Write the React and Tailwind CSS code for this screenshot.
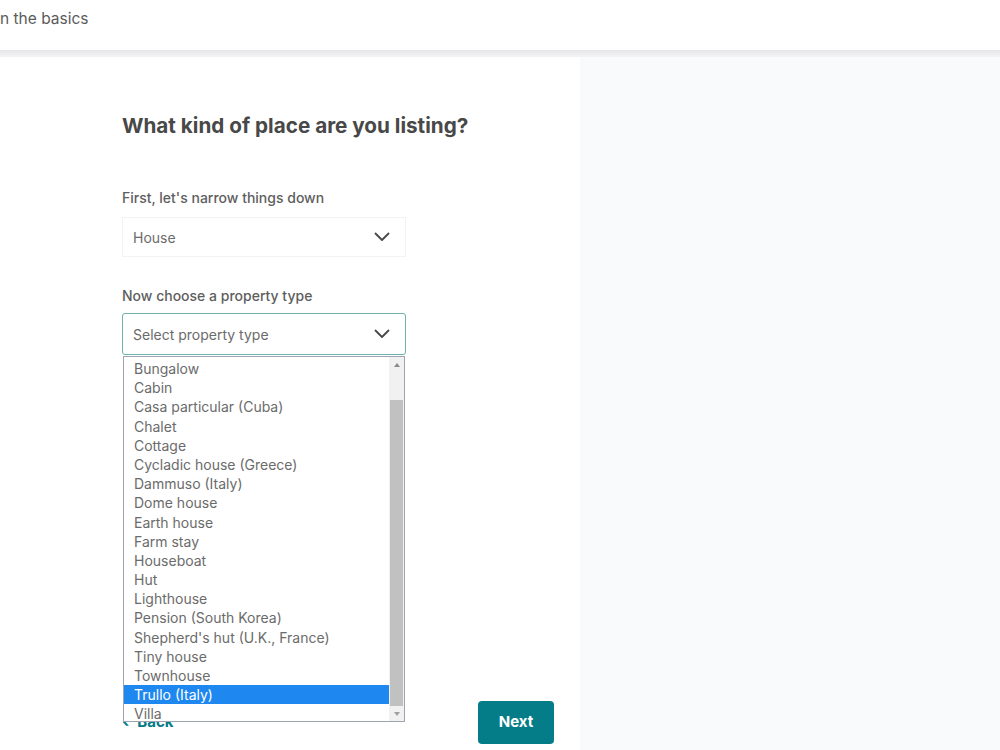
import { useState } from 'react';

const types = [
  'Bungalow',
  'Cabin',
  'Casa particular (Cuba)',
  'Chalet',
  'Cottage',
  'Cycladic house (Greece)',
  'Dammuso (Italy)',
  'Dome house',
  'Earth house',
  'Farm stay',
  'Houseboat',
  'Hut',
  'Lighthouse',
  'Pension (South Korea)',
  "Shepherd's hut (U.K., France)",
  'Tiny house',
  'Townhouse',
  'Trullo (Italy)',
  'Villa',
];

function Chevron() {
  return (
    <svg width="16" height="10" viewBox="0 0 16 10" fill="none" className="text-[#484848]">
      <path d="M1.5 1.5 L8 8 L14.5 1.5" stroke="currentColor" strokeWidth="1.8" strokeLinecap="round" strokeLinejoin="round" />
    </svg>
  );
}

function PropertyList({ active }) {
  return (
    <div className="absolute left-px top-[43px] z-10 flex h-[366px] w-[282px] overflow-hidden border border-[#9ea4b0] bg-white">
      <ul className="flex-1 pt-[2px]">
        {types.map((t) => (
          <li
            key={t}
            className={
              t === active
                ? 'h-[19.2px] bg-[#1e87f0] pl-[10px] text-[14px] leading-[19.2px] text-white'
                : 'h-[19.2px] pl-[10px] text-[14px] leading-[19.2px] text-[#6b6b6b]'
            }
          >
            {t}
          </li>
        ))}
      </ul>
      {/* Scrollbar */}
      <div className="flex w-[15px] flex-col bg-[#f1f1f1]">
        <div className="flex h-[15px] items-center justify-center">
          <div className="h-0 w-0 border-x-[3px] border-b-[4px] border-x-transparent border-b-[#8a8a8a]" />
        </div>
        <div className="mx-[1px] mt-[28px] flex-1 bg-[#c1c1c1]" />
        <div className="flex h-[15px] items-center justify-center">
          <div className="h-0 w-0 border-x-[3px] border-t-[4px] border-x-transparent border-t-[#a0a0a0]" />
        </div>
      </div>
    </div>
  );
}

export default function App() {
  const [active] = useState('Trullo (Italy)');

  return (
    <div className="flex h-[750px] w-[1000px] flex-col overflow-hidden bg-white font-['Inter',sans-serif]">
      {/* Top bar */}
      <header className="flex h-[50px] items-start bg-white pt-[7px]">
        <span className="text-[15.5px] text-[#5b5b5b]">n the basics</span>
      </header>
      <div className="h-[7px] bg-gradient-to-b from-[#e6e6e8] to-[#f4f4f6]" />

      <div className="flex flex-1">
        {/* Form column */}
        <main className="w-[580px] bg-white pl-[122px] pt-[55px]">
          <h1 className="text-[20.7px] font-bold leading-[28px] text-[#484848]">
            What kind of place are you listing?
          </h1>

          <p className="mt-[48px] text-[14px] font-medium leading-[20px] text-[#5e5e5e]">
            First, let's narrow things down
          </p>
          <div className="mt-[9px] flex h-[40px] w-[284px] items-center justify-between border border-[#f3f3f3] pl-[10px] pr-[15px]">
            <span className="text-[14px] text-[#6b6b6b]">House</span>
            <Chevron />
          </div>

          <p className="mt-[29px] text-[14px] font-medium leading-[20px] text-[#5e5e5e]">
            Now choose a property type
          </p>
          <div className="relative mt-[7px] w-[284px]">
            <div className="flex h-[42px] items-center justify-between rounded-[3px] border border-[#6fb1ab] pl-[10px] pr-[15px]">
              <span className="text-[14px] text-[#6b6b6b]">Select property type</span>
              <Chevron />
            </div>
            <PropertyList active={active} />
          </div>

          <div className="mt-[346px] flex w-[432px] items-start justify-between">
            <a className="mt-[8px] flex items-center gap-[8px] text-[15px] font-bold text-[#007a87]">
              <span className="text-[17px]">‹</span>
              Back
            </a>
            <button className="h-[43px] w-[76px] rounded-[4px] bg-[#047d88] text-[15px] font-bold text-white">
              Next
            </button>
          </div>
        </main>

        {/* Right panel */}
        <aside className="flex-1 bg-[#f9fafc]" />
      </div>
    </div>
  );
}
